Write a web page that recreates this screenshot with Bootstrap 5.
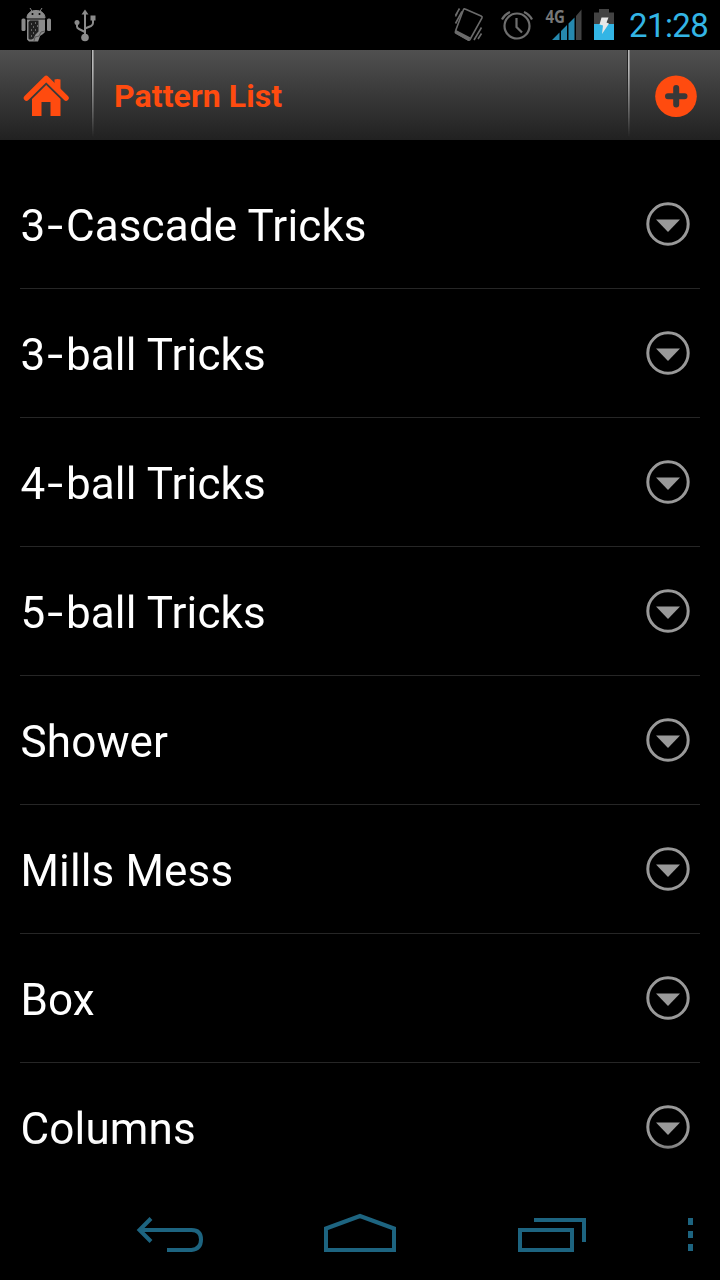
<!DOCTYPE html>
<html lang="en">
<head>
<meta charset="utf-8">
<meta name="viewport" content="width=device-width, initial-scale=1">
<title>Pattern List</title>
<link href="https://cdn.jsdelivr.net/npm/bootstrap@5.3.0/dist/css/bootstrap.min.css" rel="stylesheet">
<style>
  body { background: #000; color: #fff; font-family: Roboto, "Liberation Sans", sans-serif; }
  svg { display: block; flex: none; }
  .screen { width: 720px; height: 1280px; }
  .status { height: 50px; }
  .clock { color: #33b5e5; font-size: 33px; line-height: 50px; width: 92px; padding: 1px 0 0 1px; letter-spacing: -.6px; }
  .titlebar { height: 90px; background: linear-gradient(#505050, #212121); }
  .side-start { width: 91px; }
  .side-end { width: 90px; }
  .rule { width: 3px; background: linear-gradient(90deg, #222 0 1px, #b8b8b8 1px 2px, #8a8a8a 2px 3px); -webkit-mask-image: linear-gradient(#000 20%, transparent 97%); mask-image: linear-gradient(#000 20%, transparent 97%); }
  .title { color: #ff4b0f; font-size: 32px; font-weight: 700; line-height: 90px; padding: 1px 0 0 20px; letter-spacing: .08px; }
  .patterns { height: 1044px; padding: 20px 20px 0; -webkit-mask-image: linear-gradient(#000 calc(100% - 44px), transparent); mask-image: linear-gradient(#000 calc(100% - 44px), transparent); }
  .pattern { height: 129px; border-bottom: 1px solid #262626; font-size: 44px; line-height: 50px; padding-right: 10px; }
  .pattern-name { padding: 3px 0 0 .5px; letter-spacing: .15px; }
  .dash { display: inline-block; width: 20.500px; text-align: center; transform: scaleX(1.3); }
  .navkeys { height: 96px; }
</style>
</head>
<body>
<div class="screen d-flex flex-column overflow-hidden">
  <div class="status d-flex justify-content-between">
    <svg width="110" height="50" fill="#8b8b8b">
      <path d="M27 18C27 13 31 10.500 36 10.500S45 13 45 18ZM30 8l2.500 4M42 8l-2.500 4" stroke="#8b8b8b"/>
      <circle cx="32.500" cy="14" r="1" fill="#000"/><circle cx="39.500" cy="14" r="1" fill="#000"/>
      <rect x="21.500" y="18.500" width="4" height="12.500" rx="1.500"/><rect x="47" y="18.500" width="4" height="12.500" rx="1.500"/>
      <path d="M27 19.500H45V32l-2 2-3 2-1 3-1 2.500H29l-2-2Z"/>
      <path d="M28.500 22l1.500-1.500h8.500v11l-3 3-2 4-2 1h-2l-1-1Z" fill="#202020"/>
      <path d="M31 24h1M35 23h1M33 27h1M37 26h1M31 30h1M35 30h1M33 33h1M31 36h1" stroke="#aaa" stroke-width="1.200"/>
      <path d="M45 31l-4 1-2 4-4 1-1 4" fill="none" stroke="#555"/>
      <g fill="none" stroke="#8b8b8b" stroke-width="2"><path d="M85 14V37M77 24v2.500q0 1.500 2 2.500l6 3M93 19v4q0 2-2 3l-6 2.500"/></g>
      <path d="M85 9.500l3.500 5h-7Z"/><rect x="90.500" y="15.500" width="5" height="5"/><circle cx="77" cy="22.500" r="2.500"/><circle cx="85" cy="37.500" r="3.800"/>
    </svg>
    <div class="d-flex">
      <svg width="188" height="50" viewBox="440 0 188 50">
        <g fill="none" stroke="#6b6b6b" stroke-width="1.600">
          <path d="M463.500 9.500q.6-1 1.600-.5l16 7q1.500.8.900 2L470 39.500q-.6 1-1.600.5L456 33q-1-.8-.5-2Z"/>
          <path d="M459.500 8.500l-4 7M462 11.500l-6.500 12M457.500 12.500l-2 4M481.500 27.500l-7.500 12.500M481.500 33.500l-3.500 5.500"/>
        </g>
        <path d="M456 30l14.500 7.500-2 3.500L454.500 33Z" fill="#6b6b6b"/>
        <g fill="none" stroke="#6e6e6e" stroke-width="2.200"><circle cx="517" cy="26" r="12.500"/><path d="M516.500 18v9l5.500 5.500M502 19.500q2.500-5 8-7.500M524 12q5.500 2.500 8 7.500"/></g>
        <text x="545.500" y="23" font-family="Open Sans" font-weight="700" font-size="18" fill="#777" textLength="19.500" lengthAdjust="spacingAndGlyphs">4G</text>
        <path d="M552 40l7.500-7.500V40ZM561 31l6-6V40h-6ZM568.500 23.500l6-6V40h-6Z" fill="#2689af"/>
        <path d="M576 16l5.500-6.500V40H576Z" fill="#424242"/>
        <path d="M594 12.500h5V9h10v3.500h5V24h-20Z" fill="#434343"/><path d="M594 24h20v16h-20Z" fill="#33b5e5"/>
        <path d="M601.500 17.500h7l-2 5 2.500 1L602 34l1-8.500-3.500-1Z" fill="#e8e8e8"/>
      </svg>
      <div class="clock text-nowrap">21:28</div>
    </div>
  </div>

  <nav class="titlebar d-flex">
    <div class="side-start">
      <svg width="91" height="90" viewBox="0 50 91 90" fill="#ff4b0f">
        <path d="M54.500 79.500q3-1 6 0V91l-6-6Z"/>
        <path d="M26.500 98L46.200 78.500 66 98" fill="none" stroke="#ff4b0f" stroke-width="5.500" stroke-linecap="round" stroke-linejoin="round"/>
        <path d="M32 99L46.200 85 60.500 99V116H50.500V102H41.500V116H32Z"/>
      </svg>
    </div>
    <div class="rule"></div>
    <div class="title flex-grow-1">Pattern List</div>
    <div class="rule"></div>
    <div class="side-end">
      <svg width="90" height="90" viewBox="630 50 90 90">
        <circle cx="676" cy="96.300" r="20.800" fill="#ff4b0f"/>
        <path d="M676.200 88v16.500M668 96.300h16.500" stroke="#383838" stroke-width="6" stroke-linecap="round"/>
      </svg>
    </div>
  </nav>

  <main class="patterns overflow-hidden" id="patterns"></main>

  <div class="navkeys">
    <svg width="720" height="96" viewBox="0 1184 720 96" fill="none" stroke="#1d6480" stroke-width="4">
      <path d="M139 1230H191.500Q201 1230 201 1239.500T191.500 1250H167M151 1218.500L139.500 1230 151 1241.500"/>
      <path d="M326 1250V1228.500L360 1216l34 12.500V1250Z"/>
      <path d="M520 1230h52v20h-52ZM534 1220h50v22"/>
      <path d="M690.500 1218v7m0 6v7m0 6v7" stroke-width="5"/>
    </svg>
  </div>
</div>
<script src="https://cdn.jsdelivr.net/npm/bootstrap@5.3.0/dist/js/bootstrap.bundle.min.js"></script>
<script>
  const names = ['3-Cascade Tricks', '3-ball Tricks', '4-ball Tricks', '5-ball Tricks', 'Shower', 'Mills Mess', 'Box', 'Columns'];
  document.getElementById('patterns').innerHTML = names.map(n => `
    <div class="pattern d-flex align-items-center justify-content-between">
      <div class="pattern-name">${n.replace('-', '<span class="dash">-</span>')}</div>
      <svg width="44" height="44" viewBox="0 0 44 44"><circle cx="22" cy="22" r="20.200" fill="none" stroke="#999" stroke-width="3"/><path d="M10 17.500H34L22 30Z" fill="#999"/></svg>
    </div>`).join('');
</script>
</body>
</html>
